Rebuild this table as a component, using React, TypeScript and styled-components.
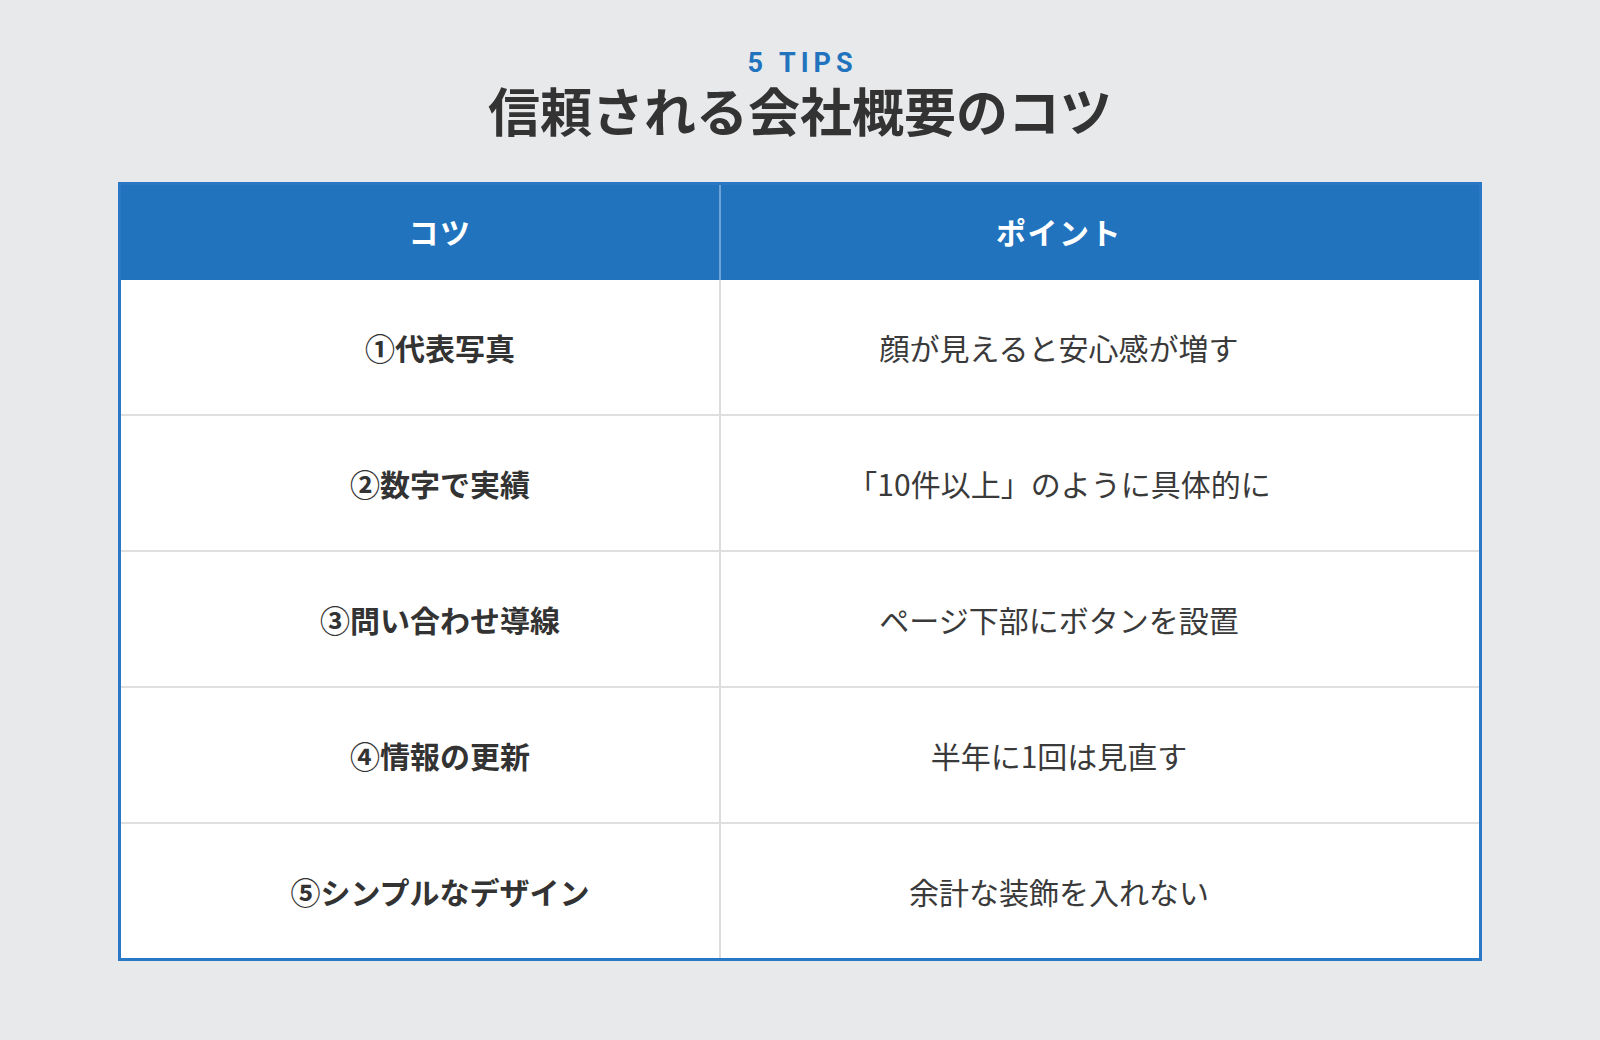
import React from "react";
import styled, { createGlobalStyle } from "styled-components";

const GlobalStyle = createGlobalStyle`
  body {
    margin: 0;
    background: #e8e9eb;
    font-family: "Noto Sans CJK JP", "Noto Sans", sans-serif;
  }
`;

const Page = styled.div`
  width: 1600px;
  height: 1040px;
  padding-top: 46px;
  box-sizing: border-box;
  display: flex;
  flex-direction: column;
  align-items: center;
`;

const Eyebrow = styled.div`
  font-family: "Roboto", "Liberation Sans", sans-serif;
  font-size: 27px;
  line-height: 34px;
  font-weight: 700;
  letter-spacing: 5px;
  padding-left: 5px;
  color: #2173be;
`;

const Title = styled.h1`
  margin: 0;
  font-size: 52px;
  line-height: 60px;
  font-weight: 700;
  color: #333333;
`;

const Table = styled.div`
  margin-top: 42px;
  width: 1364px;
  box-sizing: border-box;
  border: 3px solid #2878c6;
  background: #ffffff;
  display: grid;
  grid-template-columns: 600px 1fr;
`;

const HeadCell = styled.div<{ $first?: boolean }>`
  height: 95px;
  background: #2173be;
  color: #ffffff;
  font-size: 30px;
  letter-spacing: 1.5px;
  font-weight: 700;
  display: flex;
  align-items: center;
  justify-content: center;
  padding: ${(p) => (p.$first ? "0 0 4px 40px" : "0 82px 4px 0")};
  box-sizing: border-box;
  border-right: ${(p) => (p.$first ? "2px solid #6fa3d8" : "none")};
`;

const Cell = styled.div<{ $first?: boolean; $last?: boolean }>`
  height: ${(p) => (p.$last ? "134px" : "136px")};
  box-sizing: border-box;
  display: flex;
  align-items: center;
  justify-content: center;
  font-size: 30px;
  font-weight: ${(p) => (p.$first ? 700 : 400)};
  color: ${(p) => (p.$first ? "#333333" : "#3a3a3a")};
  padding: ${(p) => (p.$first ? "0 0 0 40px" : "0 82px 0 0")};
  border-right: ${(p) => (p.$first ? "2px solid #dcdcdc" : "none")};
  border-bottom: ${(p) => (p.$last ? "none" : "2px solid #dfdfdf")};
`;

const tips = [
  { tip: "①代表写真", point: "顔が見えると安心感が増す" },
  { tip: "②数字で実績", point: "「10件以上」のように具体的に" },
  { tip: "③問い合わせ導線", point: "ページ下部にボタンを設置" },
  { tip: "④情報の更新", point: "半年に1回は見直す" },
  { tip: "⑤シンプルなデザイン", point: "余計な装飾を入れない" },
];

export default function App() {
  return (
    <>
      <GlobalStyle />
      <Page>
        <Eyebrow>5 TIPS</Eyebrow>
        <Title>信頼される会社概要のコツ</Title>
        <Table>
          <HeadCell $first>コツ</HeadCell>
          <HeadCell>ポイント</HeadCell>
          {tips.map((x, i) => (
            <React.Fragment key={x.tip}>
              <Cell $first $last={i === tips.length - 1}>
                {x.tip}
              </Cell>
              <Cell $last={i === tips.length - 1}>{x.point}</Cell>
            </React.Fragment>
          ))}
        </Table>
      </Page>
    </>
  );
}
